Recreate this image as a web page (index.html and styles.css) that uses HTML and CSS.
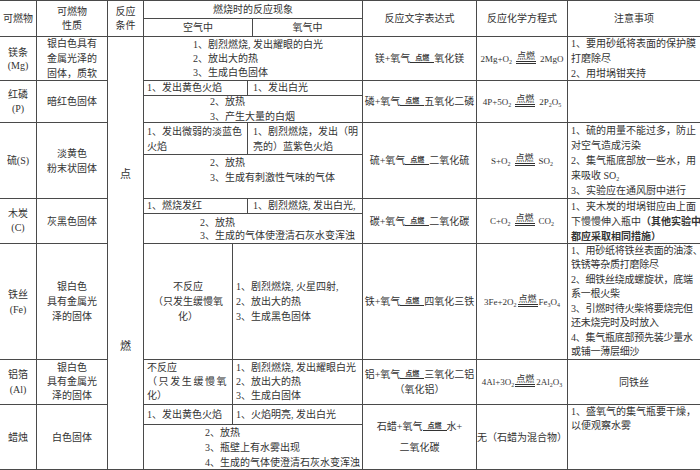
FILE: index.html
```html
<!DOCTYPE html>
<html lang="zh-CN">
<head>
<meta charset="utf-8">
<title>可燃物燃烧现象对比</title>
<link rel="stylesheet" href="styles.css">
</head>
<body>
<div class="sheet">
  <div class="cell mid c-name r-head"><p>可燃物</p></div>
  <div class="cell mid c-prop r-head lh14"><p>可燃物<br>性质</p></div>
  <div class="cell mid c-cond r-head lh14"><p>反应<br>条件</p></div>
  <div class="cell mid c-ph r-h1"><p>燃烧时的反应现象</p></div>
  <div class="cell mid c-air-h r-h2"><p>空气中</p></div>
  <div class="cell mid c-oxy-h r-h2"><p>氧气中</p></div>
  <div class="cell mid c-expr r-head"><p>反应文字表达式</p></div>
  <div class="cell mid c-eq r-head"><p>反应化学方程式</p></div>
  <div class="cell mid c-note r-head"><p>注意事项</p></div>

  <div class="cell cond c-cond r-body"><span>点</span><span>燃</span></div>

  <div class="cell mid c-name r-mg lh13"><p>镁条<br>(Mg)</p></div>
  <div class="cell mid c-prop r-mg"><p>银白色具有<br>金属光泽的<br>固体，质软</p></div>
  <div class="cell left c-ph r-mg in-a lh14"><p>1、剧烈燃烧, 发出耀眼的白光<br>2、放出大的热<br>3、生成白色固体</p></div>
  <div class="cell mid c-expr r-mg"><p>镁+氧气<span class="fire">点燃</span>氧化镁</p></div>
  <div class="cell mid c-eq r-mg"><p class="chem">2Mg+O<sub>2</sub><span class="fire2">点燃</span>2MgO</p></div>
  <div class="cell left c-note r-mg"><p>1、要用砂纸将表面的保护膜<br>打磨除尽<br>2、用坩埚钳夹持</p></div>

  <div class="cell mid c-name r-p lh14"><p>红磷<br>(P)</p></div>
  <div class="cell mid c-prop r-p"><p>暗红色固体</p></div>
  <div class="cell left c-air r-p1 lh14"><p>1、发出黄色火焰</p></div>
  <div class="cell left c-oxy r-p1 in-o lh14"><p>1、发出白光</p></div>
  <div class="cell left c-ph r-p2 in-b"><p>2、放热<br>3、产生大量的白烟</p></div>
  <div class="cell mid c-expr r-p"><p>磷+氧气<span class="fire">点燃</span>五氧化二磷</p></div>
  <div class="cell mid c-eq r-p"><p class="chem">4P+5O<sub>2</sub><span class="fire2">点燃</span>2P<sub>2</sub>O<sub>5</sub></p></div>
  <div class="cell c-note r-p"></div>

  <div class="cell mid c-name r-s"><p>硫(S)</p></div>
  <div class="cell mid c-prop r-s"><p>淡黄色<br>粉末状固体</p></div>
  <div class="cell left c-air r-s1"><p>1、发出微弱的淡蓝色<br>火焰</p></div>
  <div class="cell left c-oxy r-s1 in-o"><p>1、剧烈燃烧，发出（明<br>亮的）蓝紫色火焰</p></div>
  <div class="cell left top c-ph r-s2 in-b"><p>2、放热<br>3、生成有刺激性气味的气体</p></div>
  <div class="cell mid c-expr r-s"><p>硫+氧气<span class="fire">点燃</span>二氧化硫</p></div>
  <div class="cell mid c-eq r-s"><p class="chem">S+O<sub>2</sub><span class="fire2">点燃</span>SO<sub>2</sub></p></div>
  <div class="cell left c-note r-s"><p>1、硫的用量不能过多，防止<br>对空气造成污染<br>2、集气瓶底部放一些水，用<br>来吸收 SO<sub>2</sub><br>3、实验应在通风厨中进行</p></div>

  <div class="cell mid c-name r-c lh14"><p>木炭<br>(C)</p></div>
  <div class="cell mid c-prop r-c"><p>灰黑色固体</p></div>
  <div class="cell left c-air r-c1 lh14"><p>1、燃烧发红</p></div>
  <div class="cell left c-oxy r-c1 in-o lh14"><p>1、剧烈燃烧, 发出白光,</p></div>
  <div class="cell left c-ph r-c2 in-c lh13"><p>2、放热<br>3、生成的气体使澄清石灰水变浑浊</p></div>
  <div class="cell mid c-expr r-c"><p>碳+氧气<span class="fire">点燃</span>二氧化碳</p></div>
  <div class="cell mid c-eq r-c"><p class="chem">C+O<sub>2</sub><span class="fire2">点燃</span>CO<sub>2</sub></p></div>
  <div class="cell left c-note r-c"><p>1、夹木炭的坩埚钳应由上面<br>下慢慢伸入瓶中<b>（其他实验中<br>都应采取相同措施）</b></p></div>

  <div class="cell mid c-name r-fe"><p>铁丝<br>(Fe)</p></div>
  <div class="cell mid c-prop r-fe"><p>银白色<br>具有金属光<br>泽的固体</p></div>
  <div class="cell mid c-air-n r-fe"><p>不反应<br>（只发生缓慢氧<br>化）</p></div>
  <div class="cell left c-oxy-w r-fe"><p>1、剧烈燃烧, 火星四射,<br>2、放出大的热<br>3、生成黑色固体</p></div>
  <div class="cell mid c-expr r-fe"><p>铁+氧气<span class="fire">点燃</span>四氧化三铁</p></div>
  <div class="cell mid c-eq r-fe"><p class="chem">3Fe+2O<sub>2</sub><span class="fire2 tight">点燃</span>Fe<sub>3</sub>O<sub>4</sub></p></div>
  <div class="cell left c-note r-fe lh145 narrow"><p>1、用砂纸将铁丝表面的油漆、<br>铁锈等杂质打磨除尽<br>2、细铁丝绕成螺旋状，底端<br>系一根火柴<br>3、引燃时待火柴将要烧完但<br>还未烧完时及时放入<br>4、集气瓶底部预先装少量水<br>或铺一薄层细沙</p></div>

  <div class="cell mid c-name r-al"><p>铝箔<br>(Al)</p></div>
  <div class="cell mid c-prop r-al lh14"><p>银白色<br>具有金属光<br>泽的固体</p></div>
  <div class="cell left c-air-n r-al lh14"><p>不反应<br><span class="spread">（只发生缓慢氧</span><br>化）</p></div>
  <div class="cell left c-oxy-w r-al lh14"><p>1、剧烈燃烧, 发出耀眼白光<br>2、放出大的热<br>3、生成白固体</p></div>
  <div class="cell mid c-expr r-al"><p>铝+氧气<span class="fire">点燃</span>三氧化二铝<br>（氧化铝）</p></div>
  <div class="cell mid c-eq r-al"><p class="chem">4Al+3O<sub>2</sub><span class="fire2 tight">点燃</span>2Al<sub>2</sub>O<sub>3</sub></p></div>
  <div class="cell mid c-note r-al"><p>同铁丝</p></div>

  <div class="cell mid c-name r-cd"><p>蜡烛</p></div>
  <div class="cell mid c-prop r-cd"><p>白色固体</p></div>
  <div class="cell left c-air-n r-cd1"><p>1、发出黄色火焰</p></div>
  <div class="cell left c-oxy-w r-cd1"><p>1、火焰明亮, 发出白光</p></div>
  <div class="cell left top c-ph r-cd2 in-d"><p>2、放热<br>3、瓶壁上有水雾出现<br>4、生成的气体使澄清石灰水变浑浊</p></div>
  <div class="cell mid c-expr r-cd lh21"><p>石蜡+氧气<span class="fire">点燃</span>水+<br>二氧化碳</p></div>
  <div class="cell mid c-eq r-cd"><p>无（石蜡为混合物）</p></div>
  <div class="cell left top c-note r-cd lh14"><p>1、盛氧气的集气瓶要干燥，<br>以便观察水雾</p></div>
</div>
</body>
</html>
```

FILE: styles.css
```css
* { box-sizing: border-box; }
html, body { margin: 0; padding: 0; background: #fff; }
body {
  font-family: "Liberation Serif", "Noto Sans CJK SC", serif;
  font-size: 10px;
  line-height: 15px;
  color: #333;
}
.sheet {
  display: grid;
  width: 700px;
  height: 470px;
  padding: 1px 0;
  gap: 1px;
  background: #4a4a4a;
  grid-template-columns: 36px 70px 35px 88px 14px 4px 109px 113px 90px 132px;
  grid-template-rows: 17px 17px 43px 14px 26px 31px 43px 14px 29px 115px 44px 19px 44px;
}
.cell {
  background: #fff;
  display: flex;
  flex-direction: column;
  justify-content: center;
  overflow: hidden;
  min-width: 0;
  min-height: 0;
}
.cell p { margin: 0; white-space: nowrap; }
.mid { align-items: center; text-align: center; }
.left { align-items: flex-start; text-align: left; padding-left: 3px; }
.top { justify-content: flex-start; }

.lh13 { line-height: 13px; }
.lh14 { line-height: 14px; }
.lh145 { line-height: 14.5px; }
.lh21 { line-height: 21px; }
.narrow { letter-spacing: -0.25px; }

.in-a { padding-left: 49px; }
.in-b { padding-left: 66px; }
.in-c { padding-left: 56px; }
.in-d { padding-left: 61px; }
.in-o { padding-left: 5px; }

/* columns */
.c-name { grid-column: 1; }
.c-prop { grid-column: 2; }
.c-cond { grid-column: 3; }
.c-ph { grid-column: 4 / 8; }
.c-air-h { grid-column: 4 / 7; }
.c-oxy-h { grid-column: 7 / 8; }
.c-air { grid-column: 4 / 6; }
.c-oxy { grid-column: 6 / 8; }
.c-air-n { grid-column: 4 / 5; }
.c-oxy-w { grid-column: 5 / 8; }
.c-expr { grid-column: 8; }
.c-eq { grid-column: 9; }
.c-note { grid-column: 10; }

/* rows */
.r-head { grid-row: 1 / 3; }
.r-h1 { grid-row: 1; }
.r-h2 { grid-row: 2; }
.r-body { grid-row: 3 / 14; }
.r-mg { grid-row: 3; }
.r-p { grid-row: 4 / 6; }
.r-p1 { grid-row: 4; }
.r-p2 { grid-row: 5; }
.r-s { grid-row: 6 / 8; }
.r-s1 { grid-row: 6; }
.r-s2 { grid-row: 7; }
.r-c { grid-row: 8 / 10; }
.r-c1 { grid-row: 8; }
.r-c2 { grid-row: 9; }
.r-fe { grid-row: 10; }
.r-al { grid-row: 11; }
.r-cd { grid-row: 12 / 14; }
.r-cd1 { grid-row: 12; }
.r-cd2 { grid-row: 13; }

.cond {
  justify-content: flex-start;
  align-items: center;
  padding-top: 130px;
  gap: 157px;
  font-size: 11px;
}

.fire {
  display: inline-block;
  font-size: 7px;
  line-height: 8px;
  font-weight: bold;
  padding: 0 5px;
  border-bottom: 1px solid #333;
  vertical-align: 2px;
}
.chem { font-size: 9px; }
.fire2 {
  display: inline-block;
  font-size: 9px;
  line-height: 10px;
  padding: 0 1px;
  margin: 0 4px;
  border-bottom: 3px double #333;
  vertical-align: 3px;
}
.fire2.tight { margin: 0 1px; }
sub { font-size: 6px; line-height: 0; vertical-align: -2px; }
.spread { letter-spacing: 1.6px; }
b { font-weight: bold; }
```
